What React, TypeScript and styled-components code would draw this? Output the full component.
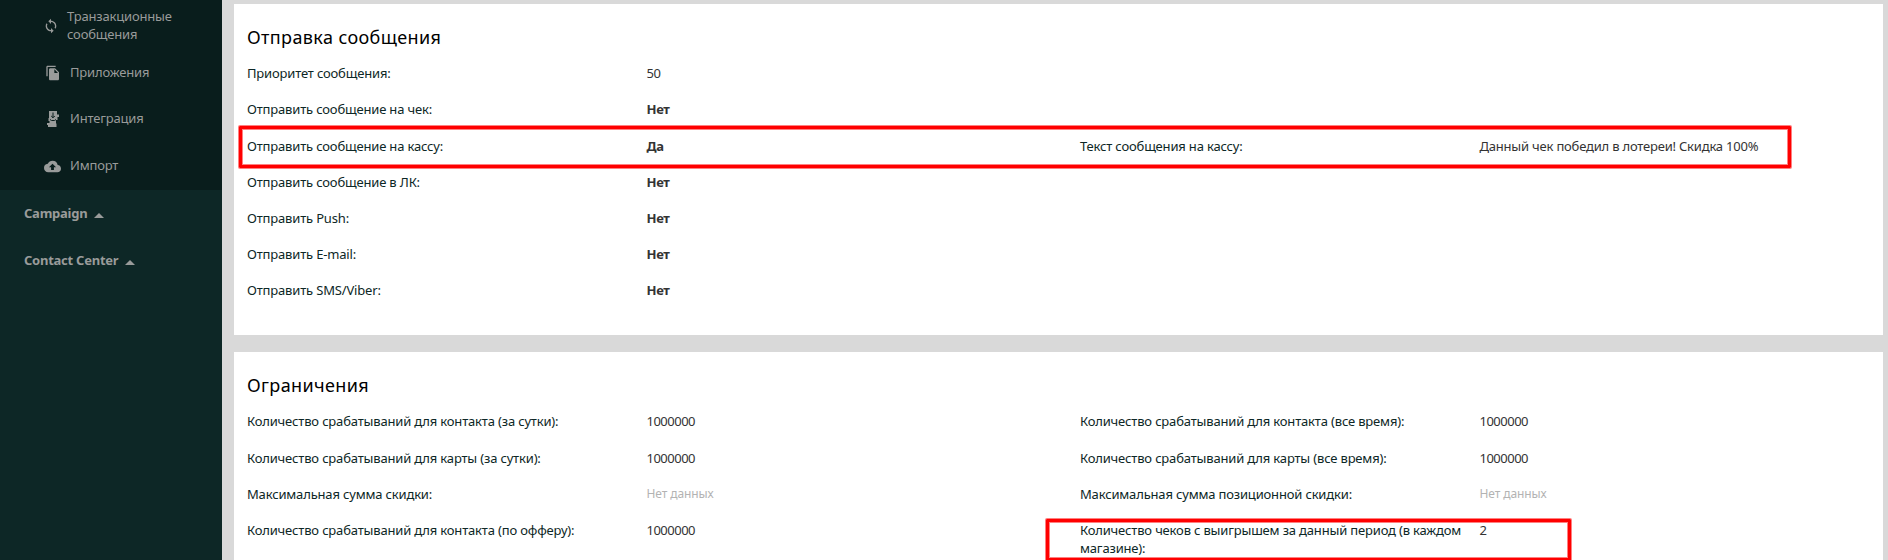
import React from "react";
import styled, { createGlobalStyle } from "styled-components";
import { MdCloudUpload, MdFileCopy, MdSync } from "react-icons/md";

const GlobalStyle = createGlobalStyle`
  * { box-sizing: border-box; }
  body {
    margin: 0;
    background: #d9d9d9;
    font-family: "Noto Sans", "Open Sans", sans-serif;
    font-size: 13px;
    line-height: 18px;
    letter-spacing: -0.17px;
  }
`;

const Page = styled.div`
  position: relative;
  display: flex;
  height: 560px;
  overflow: hidden;
`;

const Sidebar = styled.nav`
  flex: 0 0 222px;
  background: #0d2726;
  color: #999b9a;
`;

const SubMenu = styled.div`
  display: flex;
  flex-direction: column;
  height: 190px;
  padding-top: 2px;
  background: #091d1c;
`;

const SubItem = styled.a<{ $height?: number }>`
  display: flex;
  flex: none;
  align-items: center;
  gap: 9px;
  height: ${(p) => p.$height ?? 46}px;
  padding-left: 44px;
`;

const IconBox = styled.span<{ $width?: number }>`
  display: flex;
  justify-content: center;
  width: ${(p) => p.$width ?? 17}px;
  flex: none;

  svg {
    flex: none;
  }
`;

const ItemText = styled.span`
  padding-bottom: 2px;
`;

const Group = styled.a`
  display: flex;
  align-items: center;
  height: 47px;
  padding: 0 0 2px 24px;
  font-weight: 700;
  letter-spacing: -0.25px;
`;

const Caret = styled.span`
  margin: 5px 0 0 7px;
  border: 5px solid transparent;
  border-top: 0;
  border-bottom-color: currentColor;
`;

const Content = styled.main`
  flex: 1;
  display: flex;
  flex-direction: column;
  gap: 17px;
  padding: 4px 5px 0 12px;
`;

const Card = styled.section<{ $top: number }>`
  flex: none;
  height: 331px;
  padding: ${(p) => p.$top}px 0 0 13px;
  background: #fff;
`;

const Title = styled.h2`
  margin: 0 0 11px;
  color: #000;
  font-size: 18px;
  font-weight: 400;
  line-height: 24px;
  letter-spacing: 0.38px;
`;

const Row = styled.div`
  display: grid;
  grid-template-columns: 399.5px 433.5px 399.5px 1fr;
  min-height: 36.2px;
  padding-top: 4px;
`;

const Label = styled.div`
  padding-right: 12px;
  color: #0d2726;
`;

type Kind = "bold" | "empty" | "number";

const spacing = { bold: "-0.35px", empty: "-0.1px", number: "-0.5px" };

const Value = styled.div<{ $kind?: Kind }>`
  color: ${(p) => (p.$kind === "empty" ? "#b3b3b3" : "#333")};
  font-weight: ${(p) => (p.$kind === "bold" ? 700 : 400)};
  font-size: ${(p) => (p.$kind === "empty" ? 12 : 13)}px;
  letter-spacing: ${(p) => (p.$kind ? spacing[p.$kind] : "-0.2px")};
`;

const Highlight = styled.div<{ $x: number; $y: number; $w: number; $h: number }>`
  position: absolute;
  left: ${(p) => p.$x}px;
  top: ${(p) => p.$y}px;
  width: ${(p) => p.$w}px;
  height: ${(p) => p.$h}px;
  border: 3px solid #f00;
  border-radius: 1px;
  box-shadow: 0 0 0 1px #ff8080, inset 0 0 0 1px #ff8080;
`;

type Field = { label: string; value: string; kind?: Kind };

const sending: Field[][] = [
  [{ label: "Приоритет сообщения:", value: "50", kind: "number" }],
  [{ label: "Отправить сообщение на чек:", value: "Нет", kind: "bold" }],
  [
    { label: "Отправить сообщение на кассу:", value: "Да", kind: "bold" },
    { label: "Текст сообщения на кассу:", value: "Данный чек победил в лотереи! Скидка 100%" },
  ],
  [{ label: "Отправить сообщение в ЛК:", value: "Нет", kind: "bold" }],
  [{ label: "Отправить Push:", value: "Нет", kind: "bold" }],
  [{ label: "Отправить E-mail:", value: "Нет", kind: "bold" }],
  [{ label: "Отправить SMS/Viber:", value: "Нет", kind: "bold" }],
];

const limits: Field[][] = [
  [
    { label: "Количество срабатываний для контакта (за сутки):", value: "1000000", kind: "number" },
    { label: "Количество срабатываний для контакта (все время):", value: "1000000", kind: "number" },
  ],
  [
    { label: "Количество срабатываний для карты (за сутки):", value: "1000000", kind: "number" },
    { label: "Количество срабатываний для карты (все время):", value: "1000000", kind: "number" },
  ],
  [
    { label: "Максимальная сумма скидки:", value: "Нет данных", kind: "empty" },
    { label: "Максимальная сумма позиционной скидки:", value: "Нет данных", kind: "empty" },
  ],
  [
    { label: "Количество срабатываний для контакта (по офферу):", value: "1000000", kind: "number" },
    { label: "Количество чеков с выигрышем за данный период (в каждом магазине):", value: "2", kind: "number" },
  ],
];

const IntegrationIcon = () => (
  <svg width="12" height="16" viewBox="0 0 12 16">
    <path fill="currentColor" d="M2 0H10V3.5H12V6H10.5V9H9V12.5H9.5V16H1V14H0V12H2.5V10H1.5V7H2Z" />
    <path fill="none" stroke="#091d1c" strokeWidth="1" d="M6 1.5V6.5M4.2 5L6 6.8L7.8 5M3 8.5L4.5 9.5H7.5L9 8.5" />
  </svg>
);

const FieldRows = ({ rows }: { rows: Field[][] }) => (
  <>
    {rows.map((fields) => (
      <Row key={fields[0].label}>
        {fields.map((f) => (
          <React.Fragment key={f.label}>
            <Label>{f.label}</Label>
            <Value $kind={f.kind}>{f.value}</Value>
          </React.Fragment>
        ))}
      </Row>
    ))}
  </>
);

export default function App() {
  return (
    <Page>
      <GlobalStyle />
      <Sidebar>
        <SubMenu>
          <SubItem $height={48}>
            <IconBox $width={14}><MdSync size={16} /></IconBox>
            <ItemText>Транзакционные<br />сообщения</ItemText>
          </SubItem>
          <SubItem>
            <IconBox><MdFileCopy size={16} /></IconBox>
            <ItemText>Приложения</ItemText>
          </SubItem>
          <SubItem>
            <IconBox><IntegrationIcon /></IconBox>
            <ItemText>Интеграция</ItemText>
          </SubItem>
          <SubItem $height={48}>
            <IconBox><MdCloudUpload size={17} /></IconBox>
            <ItemText>Импорт</ItemText>
          </SubItem>
        </SubMenu>
        <Group>Campaign<Caret /></Group>
        <Group>Contact Center<Caret /></Group>
      </Sidebar>
      <Content>
        <Card $top={21.2}>
          <Title>Отправка сообщения</Title>
          <FieldRows rows={sending} />
        </Card>
        <Card $top={21.4}>
          <Title>Ограничения</Title>
          <FieldRows rows={limits} />
        </Card>
      </Content>
      <Highlight $x={239} $y={126} $w={1552} $h={42} />
      <Highlight $x={1046} $y={519} $w={525} $h={42} />
    </Page>
  );
}
